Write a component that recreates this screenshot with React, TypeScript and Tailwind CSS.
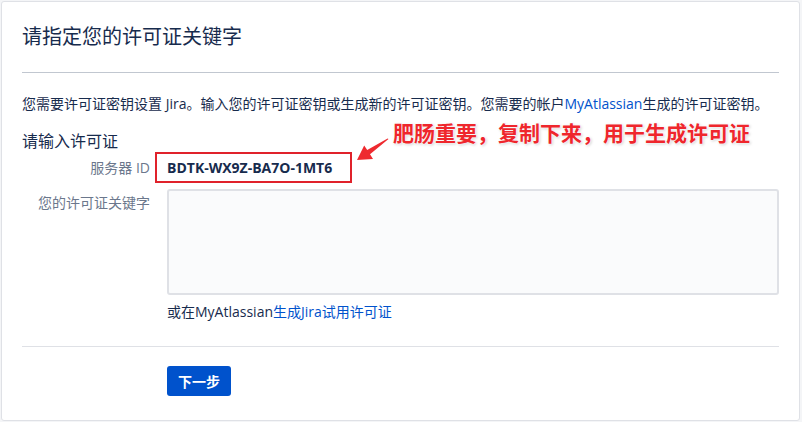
// License key step — Jira setup wizard, with a red screenshot annotation over the server ID.
const font = "font-['Open_Sans','Noto_Sans_CJK_SC',sans-serif]";

function Arrow() {
  return (
    <svg className="pointer-events-none absolute left-[350px] top-[130px]" width="40" height="32" viewBox="0 0 40 32">
      <polygon points="36.5,7 35.6,6.4 15.2,18.1 12.2,13.5 5,28 21,26.9 18,22.3" fill="#ee2a2f" />
    </svg>
  );
}

export default function App() {
  return (
    <div className={`h-[422px] w-[802px] bg-[#f4f5f7] pl-px pt-px text-[#172b4d] ${font}`}>
      <div className="relative h-[420px] w-[799px] rounded-[3px] border border-[#dfe1e6] bg-white px-5">
        <h1 className="mt-[23px] text-[20px] leading-[24px] font-normal">请指定您的许可证关键字</h1>
        <div className="mt-[23px] h-px bg-[#c1c7d0]" />

        <p className="mt-[21px] whitespace-nowrap text-[14px] leading-[20px]">
          您需要许可证密钥设置 Jira。输入您的许可证密钥或生成新的许可证密钥。您需要的帐户<span className="text-[#0052cc]">MyAtlassian</span>生成的许可证密钥。
        </p>

        <h2 className="mt-[17px] text-[16px] leading-[20px] font-normal">请输入许可证</h2>

        <div className="mt-[2px] flex h-[30px] items-center gap-[17px] text-[14px] leading-[20px]">
          <span className="w-[128px] text-right text-[#6b778c]">服务器 ID</span>
          <span className="relative font-bold">
            BDTK-WX9Z-BA7O-1MT6
            <span className="absolute -top-[6px] -bottom-[5px] -left-[12px] -right-[20px] border-2 border-[#e0222b]" />
          </span>
        </div>

        <div className="mt-[6px] flex gap-[17px] text-[14px] leading-[20px]">
          <span className="w-[128px] pt-[4px] text-right text-[#6b778c]">您的许可证关键字</span>
          <div className="flex-1">
            <textarea className="block h-[106px] w-full resize-none rounded-[3px] border-2 border-[#dfe1e6] bg-[#fafbfc] outline-none" />
            <p className="mt-[7px]">
              或在MyAtlassian<span className="text-[#0052cc]">生成Jira试用许可证</span>
            </p>
          </div>
        </div>

        <div className="mt-[24px] h-px bg-[#dfe1e6]" />

        <div className="mt-[19px] pl-[145px]">
          <button type="button" className="h-[30px] w-[64px] rounded-[3px] bg-[#0052cc] text-[14px] font-bold text-white">
            下一步
          </button>
        </div>

        <div className="absolute left-[391px] top-[118px] whitespace-nowrap text-[21px] leading-[26px] font-bold text-[#ef262c] [text-shadow:0_0_2px_#fff,0_0_3px_#fff,1px_1px_3px_rgba(0,0,0,0.25)]">
          肥肠重要，复制下来，用于生成许可证
        </div>
        <Arrow />
      </div>
    </div>
  );
}
